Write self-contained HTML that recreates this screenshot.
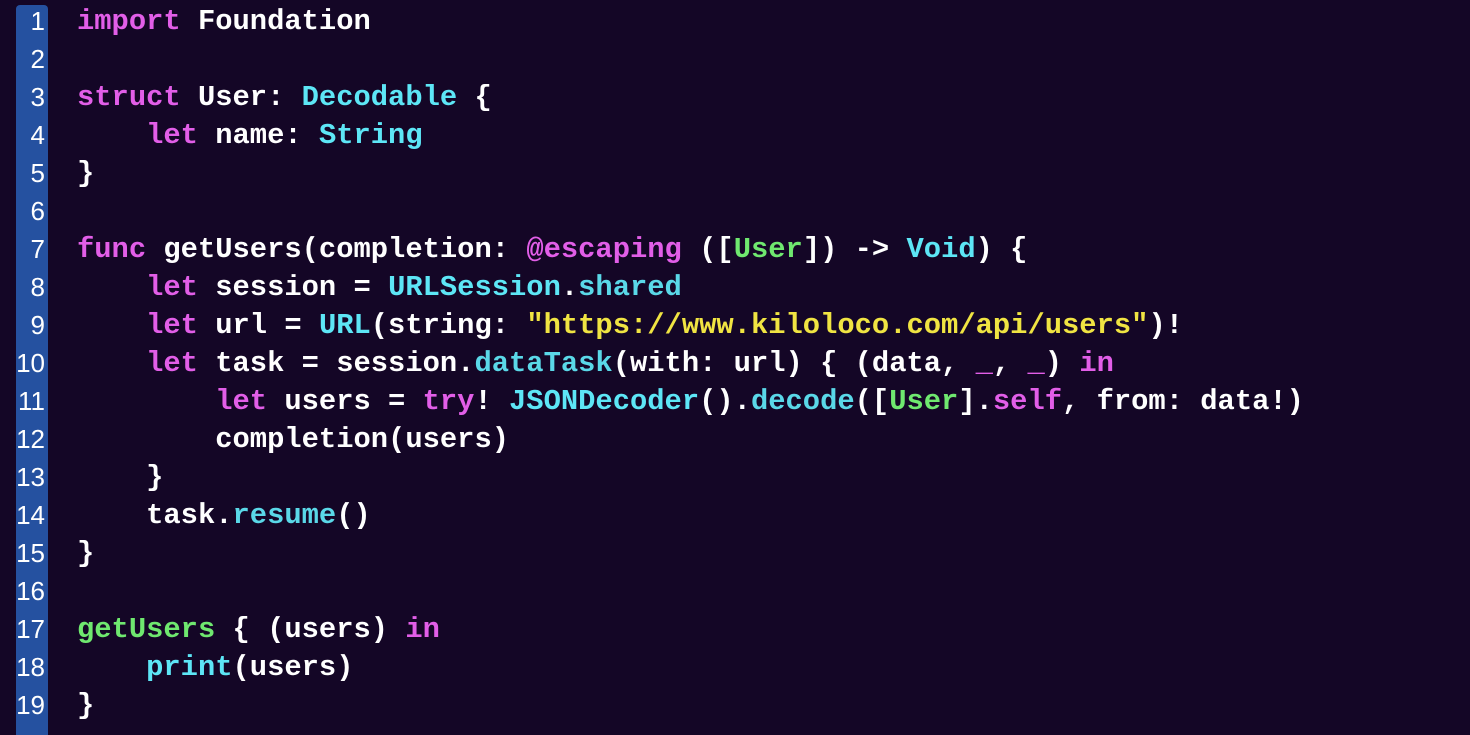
<!DOCTYPE html>
<html><head><style>
html,body{margin:0;padding:0;width:1470px;height:730px;background:#140626;overflow:hidden}
.g{position:absolute;left:16px;top:5px;width:32px;height:730px;background:#2551a0;border-radius:4px 4px 0 0}
.n{position:absolute;left:0;top:2px;width:45px;text-align:right;font:26px/38px "Liberation Sans",sans-serif;color:#fff}
pre{position:absolute;left:77px;top:3px;margin:0;font:bold 28.8px/38px "Liberation Mono",monospace;color:#fff;letter-spacing:0}
.k{color:#e25ee8}.t{color:#5de6f6}.m{color:#5ad8e8}.gr{color:#6fe86f}.s{color:#f0e442}
</style></head><body>
<div class="g"></div>
<div class="n">1<br>2<br>3<br>4<br>5<br>6<br>7<br>8<br>9<br>10<br>11<br>12<br>13<br>14<br>15<br>16<br>17<br>18<br>19</div>
<pre><span class="k">import</span> Foundation

<span class="k">struct</span> User: <span class="t">Decodable</span> {
    <span class="k">let</span> name: <span class="t">String</span>
}

<span class="k">func</span> getUsers(completion: <span class="k">@escaping</span> ([<span class="gr">User</span>]) -&gt; <span class="t">Void</span>) {
    <span class="k">let</span> session = <span class="t">URLSession</span>.<span class="m">shared</span>
    <span class="k">let</span> url = <span class="t">URL</span>(string: <span class="s">"https://www.kiloloco.com/api/users"</span>)!
    <span class="k">let</span> task = session.<span class="m">dataTask</span>(with: url) { (data, <span class="k">_</span>, <span class="k">_</span>) <span class="k">in</span>
        <span class="k">let</span> users = <span class="k">try</span>! <span class="t">JSONDecoder</span>().<span class="m">decode</span>([<span class="gr">User</span>].<span class="k">self</span>, from: data!)
        completion(users)
    }
    task.<span class="m">resume</span>()
}

<span class="gr">getUsers</span> { (users) <span class="k">in</span>
    <span class="t">print</span>(users)
}</pre>
</body></html>
